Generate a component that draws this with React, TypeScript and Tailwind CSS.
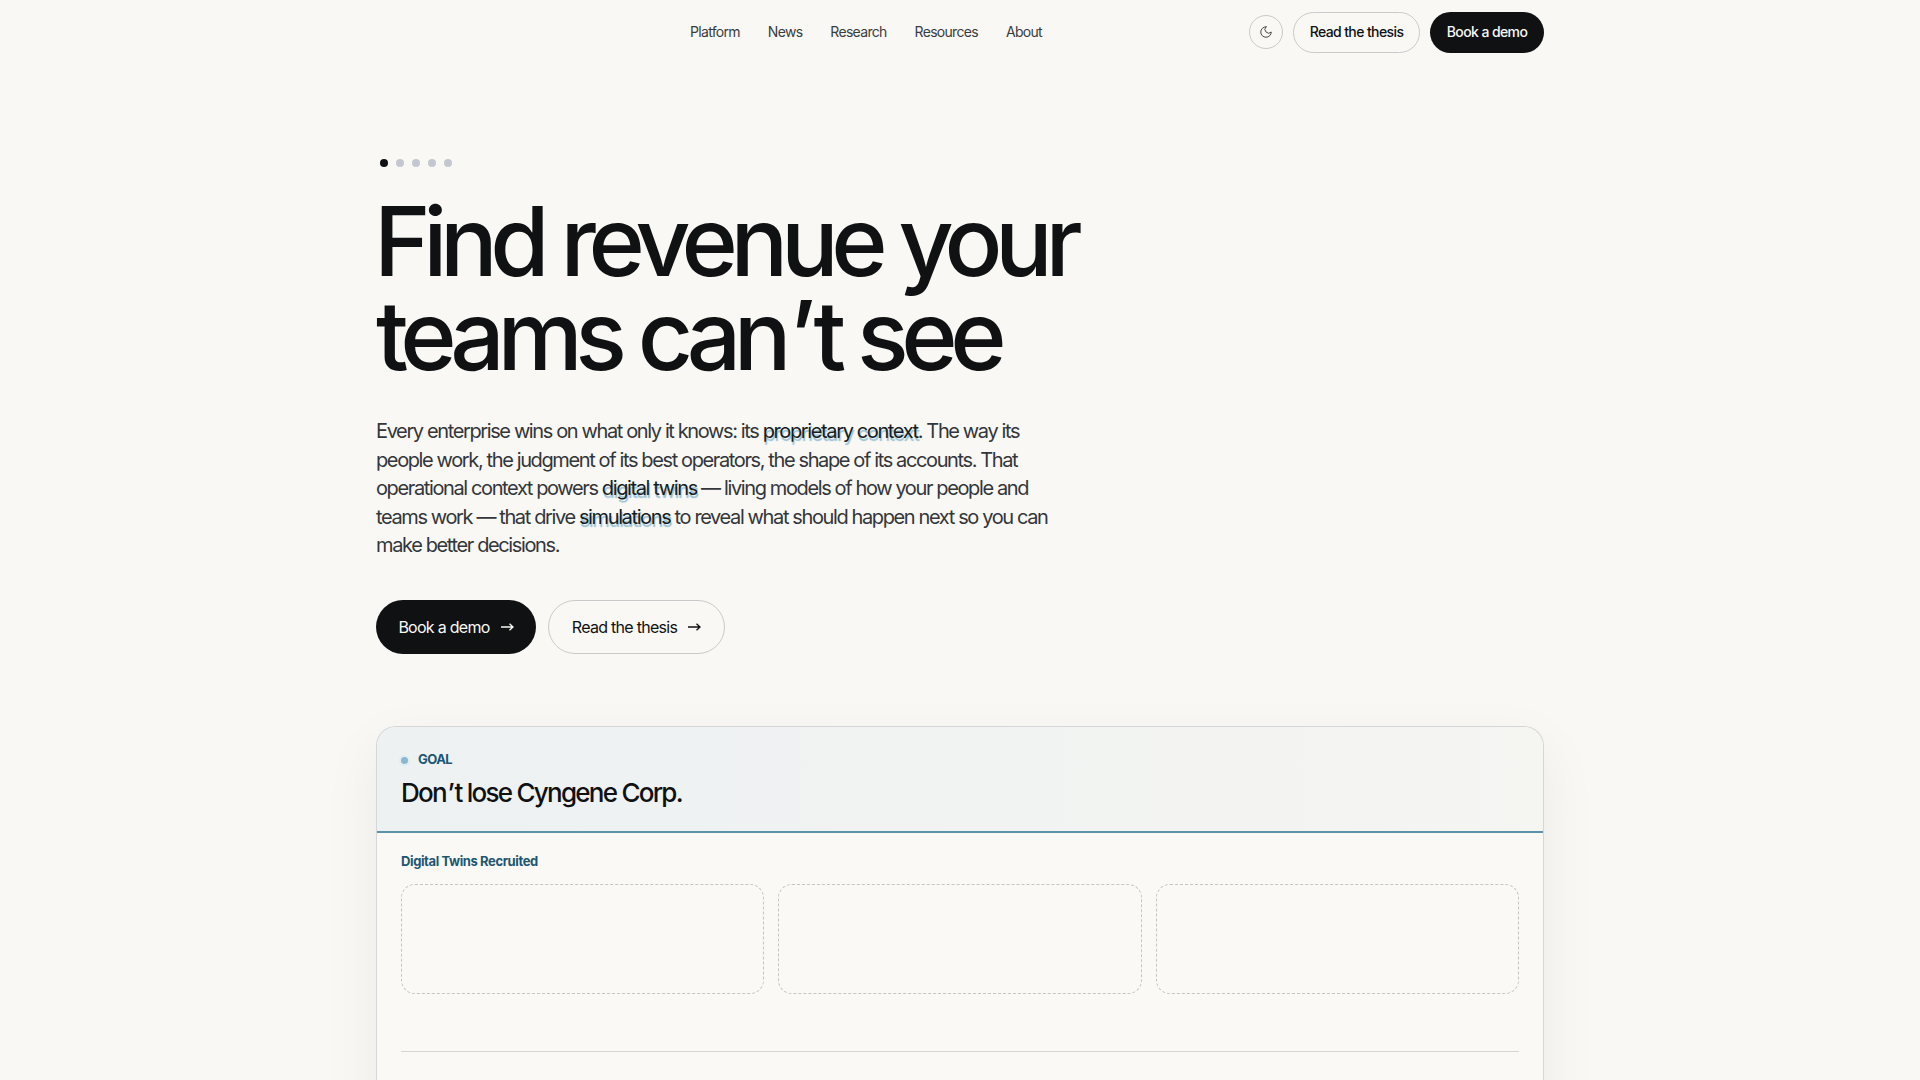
const NAV_LINKS = ['Platform', 'News', 'Research', 'Resources', 'About'];

const Highlight = ({ children }: { children: string }) => (
  <span className="[text-shadow:1px_3px_1px_rgba(80,150,185,0.6)] text-[#141d23]">{children}</span>
);

const Arrow = () => (
  <svg width="14" height="10" viewBox="0 0 14 10" fill="none" stroke="currentColor" strokeWidth="1.3">
    <path d="M1 5h12M9.5 1.8 13 5 9.5 8.2" />
  </svg>
);

const Header = () => (
  <header className="h-[62px] flex justify-center bg-[#f9f8f5]">
    <div className="w-[1168px] h-[64px] shrink-0 flex items-center">
      <div className="w-[107px]" />
      <nav className="flex-1 flex justify-center gap-[28px] text-sm tracking-[-0.05em] text-[#3a3d40]">
        {NAV_LINKS.map((link) => (
          <a key={link}>{link}</a>
        ))}
      </nav>
      <div className="flex items-center gap-[10px]">
        <button className="size-[34px] rounded-full border border-[#c9cacc] flex items-center justify-center text-[#3a3d40]">
          <svg width="14" height="14" viewBox="0 0 24 24" fill="none" stroke="currentColor" strokeWidth="1.6" strokeLinecap="round" strokeLinejoin="round">
            <path d="M12 3a6 6 0 0 0 9 9 9 9 0 1 1-9-9Z" />
          </svg>
        </button>
        <button className="h-[41px] w-[127px] rounded-full border border-[#c9cacc] text-sm font-medium tracking-[-0.043em] text-[#0f1113]">
          Read the thesis
        </button>
        <button className="h-[41px] w-[114px] rounded-full bg-[#0f1113] text-sm font-medium tracking-[-0.043em] text-[#f9f8f5]">
          Book a demo
        </button>
      </div>
    </div>
  </header>
);

const Hero = () => (
  <section>
    <div className="flex gap-2 pl-1 h-2 mt-[97px]">
      <span className="size-2 rounded-full bg-[#0f1113]" />
      <span className="size-2 rounded-full bg-[#c3c7cf]" />
      <span className="size-2 rounded-full bg-[#c3c7cf]" />
      <span className="size-2 rounded-full bg-[#c3c7cf]" />
      <span className="size-2 rounded-full bg-[#c3c7cf]" />
    </div>
    <h1 className="mt-[27px] text-[96px] leading-[94px] font-medium tracking-[-0.077em] text-[#0f1113]">
      <span className="-ml-[2px]">Find revenue your</span>
      <br />
      teams can<span className="mx-[5px]">’</span>t see
    </h1>
    <p className="mt-[35px] w-[680px] text-[20px] leading-[28.6px] tracking-[-0.069em] text-[#33363a]">
      Every enterprise wins on what only it knows: its <Highlight>proprietary context</Highlight>. The way its people
      work, the judgment of its best operators, the shape of its accounts. That operational context powers{' '}
      <Highlight>digital twins</Highlight> — living models of how your people and teams work — that drive{' '}
      <Highlight>simulations</Highlight> to reveal what should happen next so you can make better decisions.
    </p>
    <div className="mt-[40px] flex gap-3">
      <button className="h-[54px] w-[160px] rounded-full bg-[#0f1113] text-[#f9f8f5] flex items-center justify-center gap-[10px] text-base tracking-[-0.045em]">
        Book a demo
        <Arrow />
      </button>
      <button className="h-[54px] w-[177px] rounded-full border border-[#c9cacc] text-[#0f1113] flex items-center justify-center gap-[10px] text-base tracking-[-0.045em]">
        Read the thesis
        <Arrow />
      </button>
    </div>
  </section>
);

const GoalCard = () => (
  <section className="mt-[72px] rounded-t-[20px] border border-b-0 border-[#d4d6d8] bg-[#faf9f6] shadow-[0_20px_60px_rgba(15,17,19,0.06)] h-[400px]">
    <div className="h-[106px] rounded-t-[20px] border-b-2 border-[#5b93a8] bg-gradient-to-r from-[#edf1f2] to-[#f5f5f2] px-6 pt-[24px]">
      <div className="flex items-center gap-[10px] h-[18px]">
        <span className="size-[7px] mt-[2px] rounded-full bg-[#8ab8d0] ring-2 ring-[#e3edf1]" />
        <span className="text-[13px] font-bold tracking-[-0.04em] text-[#1c5672]">GOAL</span>
      </div>
      <h2 className="mt-[6px] text-[26px] leading-[36px] font-medium tracking-[-0.067em] text-[#0f1113]">
        Don<span className="mx-[1.5px]">’</span>t lose Cyngene Corp.
      </h2>
    </div>
    <div className="px-6 pt-[19px]">
      <h3 className="text-[13px] leading-[18px] font-bold tracking-[-0.03em] text-[#1c5672]">
        Digital Twins Recruited
      </h3>
      <div className="mt-[14px] grid grid-cols-3 gap-[14px]">
        <div className="h-[110px] rounded-[14px] border border-dashed border-[#c4c5c6]" />
        <div className="h-[110px] rounded-[14px] border border-dashed border-[#c4c5c6]" />
        <div className="h-[110px] rounded-[14px] border border-dashed border-[#c4c5c6]" />
      </div>
      <div className="mt-[57px] border-t border-[#d4d6d8]" />
    </div>
  </section>
);

export default function App() {
  return (
    <div className="h-[1080px] overflow-hidden bg-[#f9f8f5] bg-[radial-gradient(rgba(15,17,19,0.04)_0.7px,transparent_0.7px)] bg-[size:4px_4px] font-['Inter',sans-serif]">
      <Header />
      <main className="w-[1168px] mx-auto">
        <Hero />
        <GoalCard />
      </main>
    </div>
  );
}
